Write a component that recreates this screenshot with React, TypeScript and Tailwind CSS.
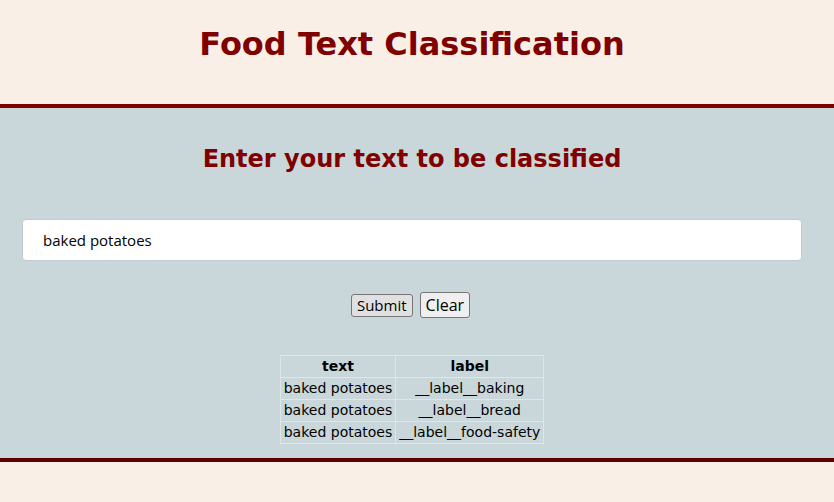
const rows = [
  { text: 'baked potatoes', label: '__label__baking' },
  { text: 'baked potatoes', label: '__label__bread' },
  { text: 'baked potatoes', label: '__label__food-safety' },
]

export default function App() {
  return (
    <div className="min-h-[502px] w-full bg-[#faefe6] font-['DejaVu_Sans',sans-serif]">
      <header className="flex h-[108px] items-center justify-center border-b-4 border-[#800000] pr-[10px]">
        <h1 className="-mt-[16px] text-[32px] font-bold text-[#800000]">Food Text Classification</h1>
      </header>

      <main className="flex h-[354px] flex-col items-center border-b-4 border-[#5c0000] bg-[#c9d7db] pl-[22px] pr-[32px]">
        <h2 className="mt-[33px] text-[24px] font-bold text-[#800000]">Enter your text to be classified</h2>

        <input
          defaultValue="baked potatoes"
          className="mt-[42px] h-[42px] w-full rounded-[4px] border border-[#c4c9cb] bg-white px-[20px] font-['Open_Sans',sans-serif] text-[15px] text-black outline-none"
        />

        <div className="mt-[31px] flex items-center gap-[7px] pr-[3px]">
          <button className="h-[23px] rounded-[3px] border border-[#767676] bg-[#e0e0e0] px-[5px] font-['Open_Sans',sans-serif] text-[15px] leading-none text-black">
            Submit
          </button>
          <button className="h-[26px] rounded-[3px] border border-[#767676] bg-[#efefef] px-[5px] font-['Open_Sans',sans-serif] text-[16px] leading-none text-black">
            Clear
          </button>
        </div>

        <table className="mt-[37px] border-collapse text-[14px] text-black">
          <thead>
            <tr>
              <th className="h-[22px] border border-[#dde6e9] px-[3px] font-bold">text</th>
              <th className="h-[22px] border border-[#dde6e9] px-[3px] font-bold">label</th>
            </tr>
          </thead>
          <tbody>
            {rows.map((r, i) => (
              <tr key={i}>
                <td className="h-[22px] border border-[#dde6e9] px-[3px] text-center">{r.text}</td>
                <td className="h-[22px] border border-[#dde6e9] px-[3px] text-center">{r.label}</td>
              </tr>
            ))}
          </tbody>
        </table>
      </main>
    </div>
  )
}
